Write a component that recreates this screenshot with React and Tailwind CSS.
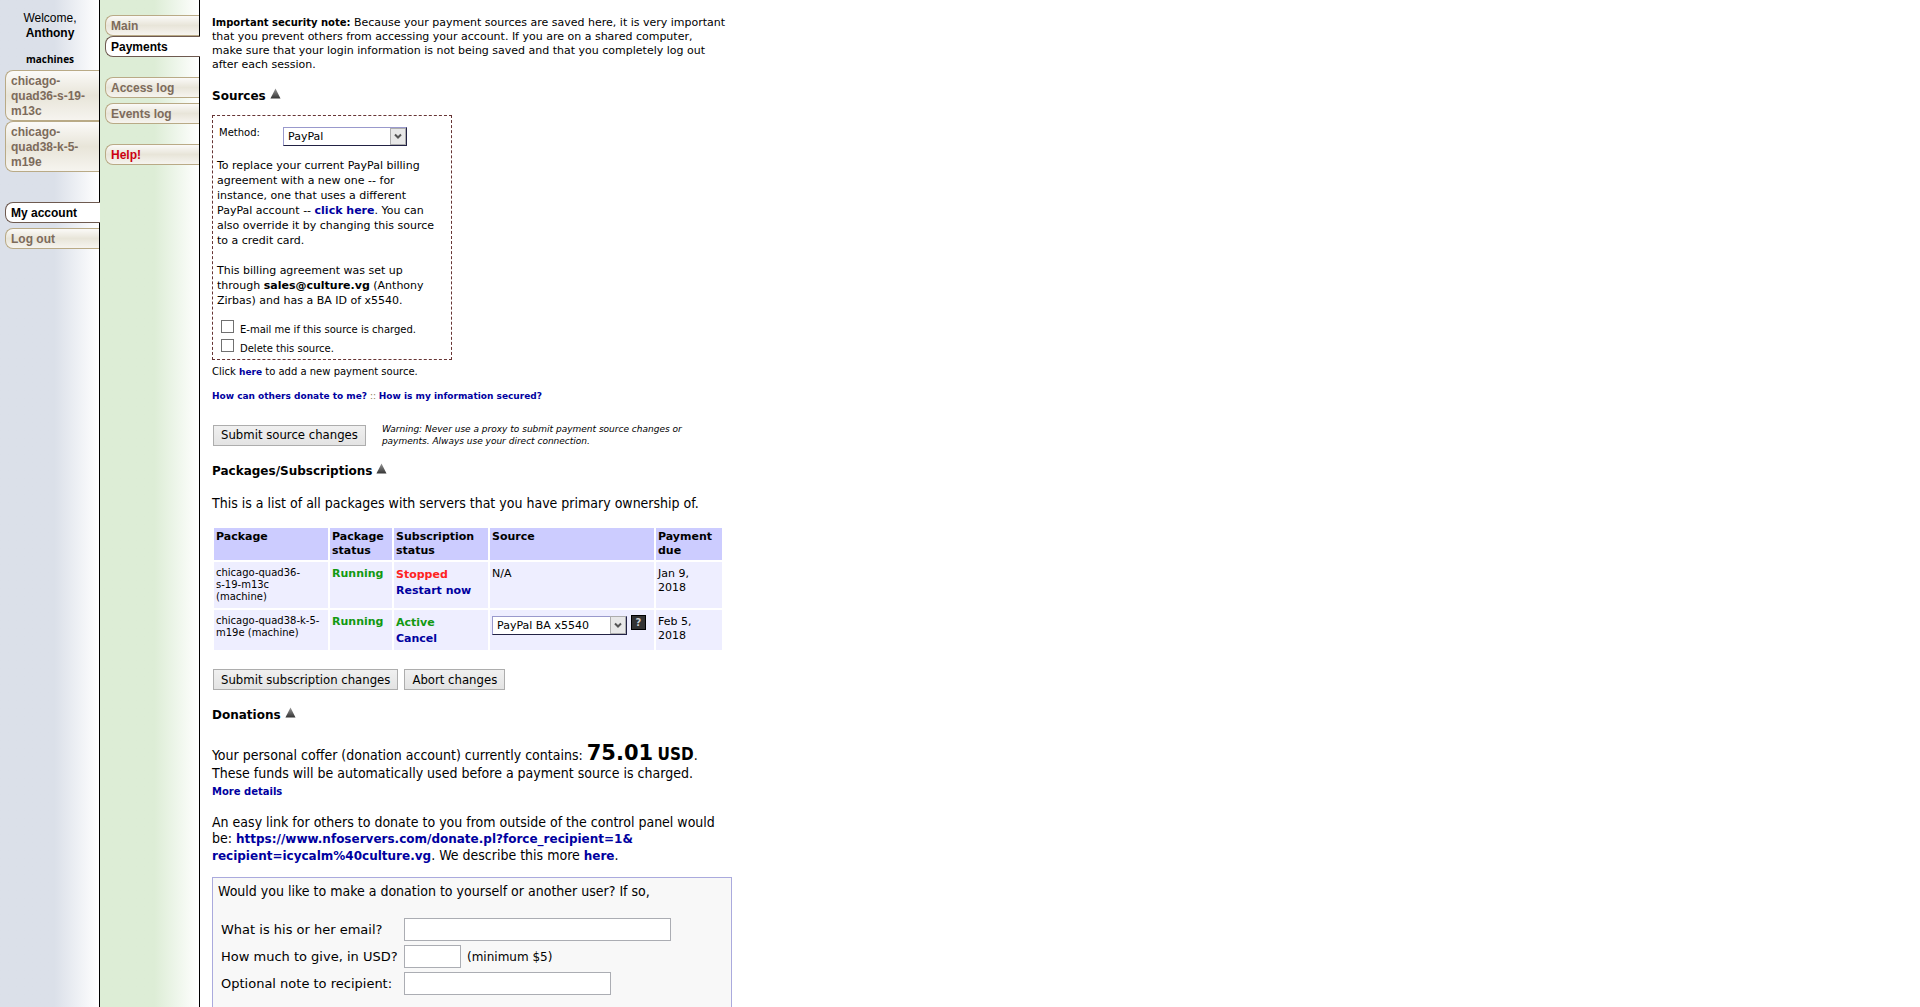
const machines = [
  { id: 'quad36', label: ['chicago-', 'quad36-s-19-', 'm13c'] },
  { id: 'quad38', label: ['chicago-', 'quad38-k-5-', 'm19e'] },
];

const tabBase = 'block rounded-l-lg border border-r-0 pl-[5px] pt-[3px] pb-px font-bold leading-[15px]';
const tabIdle = 'border-[#b9aa86] bg-linear-to-b from-[#fbfaf8] via-[#e8e5d9] to-[#f6f4ef] text-[#7d6b5b]';
const tabActive = '-mr-px border-[#6e5a50] bg-white text-black';

function Tab({ active, className = '', color = '', children }) {
  return (
    <a href="#" className={`${tabBase} ${active ? tabActive : tabIdle} ${color} ${className}`}>
      {children}
    </a>
  );
}

function A({ children, className = '' }) {
  return <a href="#" className={`font-bold text-[#0000a0] ${className}`}>{children}</a>;
}

function Heading({ children, className = '' }) {
  return (
    <h2 className={`flex gap-1 text-[12px] leading-4 font-bold ${className}`}>
      {children}
      <svg width="11" height="11" viewBox="0 0 12 11" aria-hidden="true">
        <defs>
          <linearGradient id="arrow" x1="0" y1="0" x2="0" y2="1">
            <stop offset="0" stopColor="#999" />
            <stop offset="1" stopColor="#333" />
          </linearGradient>
        </defs>
        <path d="M6 0 L11.5 11 H0.5 Z" fill="url(#arrow)" />
      </svg>
    </h2>
  );
}

function Select({ id, label, className = '', children }) {
  return (
    <span className="relative inline-flex">
      <select
        id={id}
        aria-label={label}
        className={`h-[19px] appearance-none border border-t-[#9999cc] border-l-[#9999cc] border-r-[#222244] border-b-[#222244] bg-white pl-1 text-[11px] leading-4 ${className}`}
      >
        {children}
      </select>
      <span className="pointer-events-none absolute inset-y-px right-px flex w-4 items-center justify-center border border-[#adadad] bg-[#e8e8e8]">
        <svg width="8" height="7" viewBox="0 0 8 7" aria-hidden="true">
          <path d="M1 1.5 L4 4.5 L7 1.5" fill="none" stroke="#555" strokeWidth="2" />
        </svg>
      </span>
    </span>
  );
}

function Button({ children }) {
  return (
    <button
      type="button"
      className="h-[21px] border border-[#adadad] bg-linear-to-b from-[#f0f0f0] to-[#e3e3e3] px-[7px] font-['DejaVu_Sans_Condensed','DejaVu_Sans',sans-serif] text-[13px] leading-4 whitespace-nowrap"
    >
      {children}
    </button>
  );
}

function Sidebar() {
  return (
    <nav className="w-[100px] shrink-0 border-r border-black bg-linear-to-r from-[#dbe0e9] from-55% to-white pt-[11px] pl-[5px] font-['Liberation_Sans',sans-serif] text-[12px]">
      <div className="pr-1 text-center leading-[15px]">
        Welcome,
        <br />
        <b>Anthony</b>
      </div>
      <div className="mt-[10px] mb-[3px] pr-1 text-center font-['Open_Sans',sans-serif] text-[10px] leading-4 font-bold">machines</div>
      {machines.map((m) => (
        <Tab key={m.id}>
          {m.label.map((line) => (
            <span key={line} className="block whitespace-nowrap">{line}</span>
          ))}
        </Tab>
      ))}
      <Tab active className="mt-[30px]">My account</Tab>
      <Tab className="mt-[5px]">Log out</Tab>
    </nav>
  );
}

function Submenu() {
  return (
    <nav className="w-[100px] shrink-0 border-r border-black bg-linear-to-r from-[#ddedd6] from-55% to-white pt-[15px] pl-[5px] font-['Liberation_Sans',sans-serif] text-[12px]">
      <Tab>Main</Tab>
      <Tab active>Payments</Tab>
      <Tab className="mt-5">Access log</Tab>
      <Tab className="mt-[5px]">Events log</Tab>
      <Tab className="mt-5" color="text-[#cc0011]!">Help!</Tab>
    </nav>
  );
}

function Sources() {
  return (
    <section>
      <div className="h-[245px] w-[240px] border border-dashed border-[#663333] px-1 pt-[11px] text-[11px] leading-[15px] whitespace-nowrap">
        <div className="flex pl-[2px]">
          <label htmlFor="method" className="w-16 text-[10px] leading-3">Method:</label>
          <Select id="method" className="w-[124px]">
            <option>PayPal</option>
          </Select>
        </div>
        <p className="mt-3">
          To replace your current PayPal billing<br />
          agreement with a new one -- for<br />
          instance, one that uses a different<br />
          PayPal account -- <A>click here</A>. You can<br />
          also override it by changing this source<br />
          to a credit card.
        </p>
        <p className="mt-[15px]">
          This billing agreement was set up<br />
          through <b>sales@culture.vg</b> (Anthony<br />
          Zirbas) and has a BA ID of x5540.
        </p>
        <div className="mt-3 flex flex-col gap-[3px] pl-1 text-[10px]">
          <label className="flex gap-[6px]">
            <input type="checkbox" className="size-[13px] appearance-none border border-[#707070] bg-white" />
            <span className="mt-1 leading-3">E-mail me if this source is charged.</span>
          </label>
          <label className="flex gap-[6px]">
            <input type="checkbox" className="size-[13px] appearance-none border border-[#707070] bg-white" />
            <span className="mt-1 leading-3">Delete this source.</span>
          </label>
        </div>
      </div>
      <p className="mt-1 text-[10px] leading-4">
        Click <A className="text-[9px]">here</A> to add a new payment source.
      </p>
      <p className="mt-2 text-[9px] leading-4 text-[#8a7a50]">
        <A>How can others donate to me?</A> :: <A>How is my information secured?</A>
      </p>
      <div className="mt-[19px] flex items-center gap-4 pl-px">
        <Button>Submit source changes</Button>
        <p className="text-[9px] leading-3 italic whitespace-nowrap">
          Warning: Never use a proxy to submit payment source changes or<br />
          payments. Always use your direct connection.
        </p>
      </div>
    </section>
  );
}

const bodyFont = "font-['DejaVu_Sans_Condensed','DejaVu_Sans',sans-serif] text-[14px]";
const boldFont = "font-['DejaVu_Sans',sans-serif] text-[12px]";

function Packages() {
  return (
    <section>
      <p className={`mt-4 leading-4 whitespace-nowrap ${bodyFont}`}>
        This is a list of all packages with servers that you have primary ownership of.
      </p>
      <table className="mt-[15px] w-[512px] table-fixed border-separate border-spacing-[2px] text-left text-[11px] leading-[14px] whitespace-nowrap">
        <colgroup>
          <col className="w-[114px]" />
          <col className="w-[62px]" />
          <col className="w-[94px]" />
          <col className="w-[164px]" />
          <col />
        </colgroup>
        <thead>
          <tr className="h-8 bg-[#ccccff] align-top [&>th]:p-[2px]">
            <th>Package</th>
            <th>Package<br />status</th>
            <th>Subscription<br />status</th>
            <th>Source</th>
            <th>Payment<br />due</th>
          </tr>
        </thead>
        <tbody className="align-top">
          <tr className="h-[46px] bg-[#eeeeff] [&>td]:px-[2px] [&>td]:pt-[5px]">
            <td className="text-[10px] leading-3">chicago-quad36-<br />s-19-m13c<br />(machine)</td>
            <td className="font-bold text-[#119911]">Running</td>
            <td className="leading-4 font-bold text-[#ff2222]">Stopped<br /><A>Restart now</A></td>
            <td>N/A</td>
            <td>Jan 9,<br />2018</td>
          </tr>
          <tr className="h-10 bg-[#eeeeff] [&>td]:px-[2px] [&>td]:pt-[5px]">
            <td className="text-[10px] leading-3">chicago-quad38-k-5-<br />m19e (machine)</td>
            <td className="font-bold text-[#119911]">Running</td>
            <td className="leading-4 font-bold text-[#119911]">Active<br /><A>Cancel</A></td>
            <td>
              <div className="flex items-start gap-1">
                <Select label="Source" className="mt-px w-[135px]">
                  <option>PayPal BA x5540</option>
                </Select>
                <button type="button" className="size-[15px] border border-black bg-[#333333] text-[10px] leading-3 font-bold text-[#cccccc]">?</button>
              </div>
            </td>
            <td>Feb 5,<br />2018</td>
          </tr>
        </tbody>
      </table>
      <div className="mt-[17px] flex gap-[6px] pl-px">
        <Button>Submit subscription changes</Button>
        <Button>Abort changes</Button>
      </div>
    </section>
  );
}

const inputClass = 'h-[23px] border border-[#abadb3] bg-white px-1';

function Donations() {
  return (
    <section className={`leading-4 whitespace-nowrap ${bodyFont}`}>
      <p className="mt-[21px] leading-[18px]">
        Your personal coffer (donation account) currently contains:{' '}
        <b><span className="font-['DejaVu_Sans',sans-serif] text-[21px]">75.01</span> <span className="text-[17px]">USD</span></b>.<br />
        These funds will be automatically used before a payment source is charged.
      </p>
      <A className="font-['DejaVu_Sans',sans-serif] text-[10px]">More details</A>
      <p className="mt-[14px]">
        An easy link for others to donate to you from outside of the control panel would<br />
        be: <A className={boldFont}>https://www.nfoservers.com/donate.pl?force_recipient=1&amp;<br />recipient=icycalm%40culture.vg</A>. We describe this more <A className={boldFont}>here</A>.
      </p>
      <form className="mt-[13px] border border-[#aaaadd] bg-[#f8f8f8] px-[5px] pt-[5px] pb-12">
        <p>Would you like to make a donation to yourself or another user? If so,</p>
        <div className="mt-[19px] grid grid-cols-[183px_1fr] items-center gap-y-1 pl-[3px] font-['DejaVu_Sans',sans-serif] text-[13px]">
          <label htmlFor="email">What is his or her email?</label>
          <input id="email" type="text" className={`${inputClass} w-[267px]`} />
          <label htmlFor="amount">How much to give, in USD?</label>
          <div className="flex items-center gap-[6px] text-[12px]">
            <input id="amount" type="text" className={`${inputClass} w-[57px]`} />
            (minimum $5)
          </div>
          <label htmlFor="note">Optional note to recipient:</label>
          <input id="note" type="text" className={`${inputClass} w-[207px]`} />
        </div>
      </form>
    </section>
  );
}

export default function App() {
  return (
    <div className="flex min-h-screen bg-white font-['DejaVu_Sans',sans-serif] text-black">
      <Sidebar />
      <Submenu />
      <main className="w-[532px] pt-4 pl-3">
        <p className="text-[11px] leading-[14px] whitespace-nowrap">
          <b className="text-[10px]">Important security note:</b> Because your payment sources are saved here, it is very important<br />
          that you prevent others from accessing your account. If you are on a shared computer,<br />
          make sure that your login information is not being saved and that you completely log out<br />
          after each session.
        </p>
        <Heading className="mt-4 mb-[11px]">Sources</Heading>
        <Sources />
        <Heading className="mt-4">Packages/Subscriptions</Heading>
        <Packages />
        <Heading className="mt-[17px]">Donations</Heading>
        <Donations />
      </main>
    </div>
  );
}
